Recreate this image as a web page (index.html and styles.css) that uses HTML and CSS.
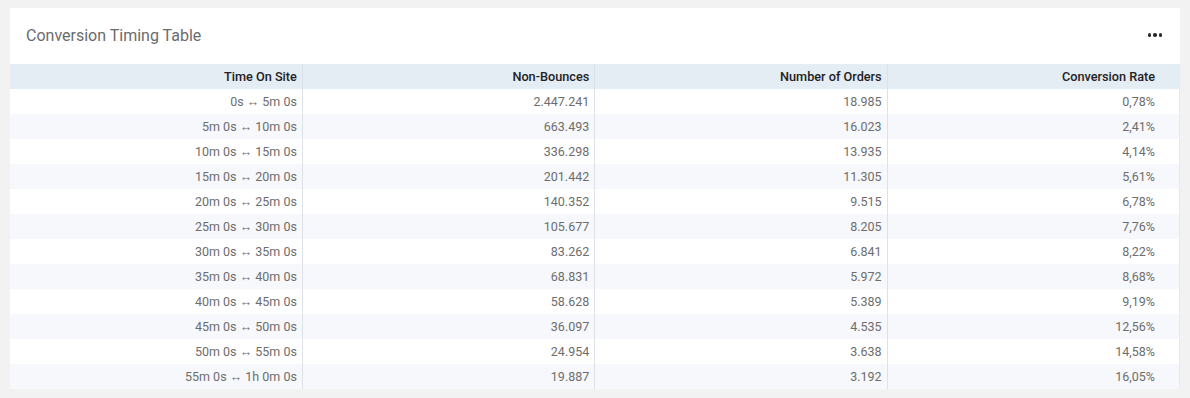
FILE: index.html
```html
<!DOCTYPE html>
<html>
<head>
<meta charset="utf-8">
<link rel="stylesheet" href="styles.css">
</head>
<body>
<div class="card">
  <div class="card-head">
    <div class="title">Conversion Timing Table</div>
    <div class="menu"><span></span><span></span><span></span></div>
  </div>
  <table class="grid">
    <thead>
      <tr><th>Time On Site</th><th>Non-Bounces</th><th>Number of Orders</th><th>Conversion Rate</th></tr>
    </thead>
    <tbody>
      <tr><td>0s ↔ 5m 0s</td><td>2.447.241</td><td>18.985</td><td>0,78%</td></tr>
      <tr><td>5m 0s ↔ 10m 0s</td><td>663.493</td><td>16.023</td><td>2,41%</td></tr>
      <tr><td>10m 0s ↔ 15m 0s</td><td>336.298</td><td>13.935</td><td>4,14%</td></tr>
      <tr><td>15m 0s ↔ 20m 0s</td><td>201.442</td><td>11.305</td><td>5,61%</td></tr>
      <tr><td>20m 0s ↔ 25m 0s</td><td>140.352</td><td>9.515</td><td>6,78%</td></tr>
      <tr><td>25m 0s ↔ 30m 0s</td><td>105.677</td><td>8.205</td><td>7,76%</td></tr>
      <tr><td>30m 0s ↔ 35m 0s</td><td>83.262</td><td>6.841</td><td>8,22%</td></tr>
      <tr><td>35m 0s ↔ 40m 0s</td><td>68.831</td><td>5.972</td><td>8,68%</td></tr>
      <tr><td>40m 0s ↔ 45m 0s</td><td>58.628</td><td>5.389</td><td>9,19%</td></tr>
      <tr><td>45m 0s ↔ 50m 0s</td><td>36.097</td><td>4.535</td><td>12,56%</td></tr>
      <tr><td>50m 0s ↔ 55m 0s</td><td>24.954</td><td>3.638</td><td>14,58%</td></tr>
      <tr><td>55m 0s ↔ 1h 0m 0s</td><td>19.887</td><td>3.192</td><td>16,05%</td></tr>
    </tbody>
  </table>
</div>
</body>
</html>
```
FILE: styles.css
```css
html, body {
  margin: 0;
  padding: 0;
  background: #f2f2f2;
  font-family: Roboto, "Liberation Sans", sans-serif;
}
body {
  padding: 8px 10px 0 10px;
}
.card {
  width: 1170px;
  background: #ffffff;
}
.card-head {
  height: 56px;
  display: flex;
  align-items: center;
  justify-content: space-between;
  padding: 0 18px 0 16px;
  box-sizing: border-box;
}
.title {
  font-size: 16px;
  color: #6b6b6b;
  padding-bottom: 2px;
}
.menu {
  display: flex;
  gap: 2px;
  padding-bottom: 2px;
}
.menu span {
  width: 3.5px;
  height: 3.5px;
  border-radius: 50%;
  background: #2a2a2a;
}
.grid {
  width: 1170px;
  border-collapse: collapse;
  table-layout: fixed;
  font-size: 12.5px;
}
.grid th, .grid td {
  height: 25px;
  padding: 0 5px 0 6px;
  text-align: right;
  box-sizing: border-box;
  border-left: 1px solid #dde2e8;
  white-space: nowrap;
}
.grid th:first-child, .grid td:first-child {
  border-left: none;
}
.grid th:last-child, .grid td:last-child {
  padding-right: 24px;
  border-right: 1px solid #e6e9ee;
}
.grid th {
  background: #e4ecf4;
  color: #222;
  font-weight: 500;
  font-size: 12.7px;
}
.grid td {
  color: #6d6d6d;
}
.grid tbody tr:nth-child(even) td {
  background: #f6f8fb;
}
```
